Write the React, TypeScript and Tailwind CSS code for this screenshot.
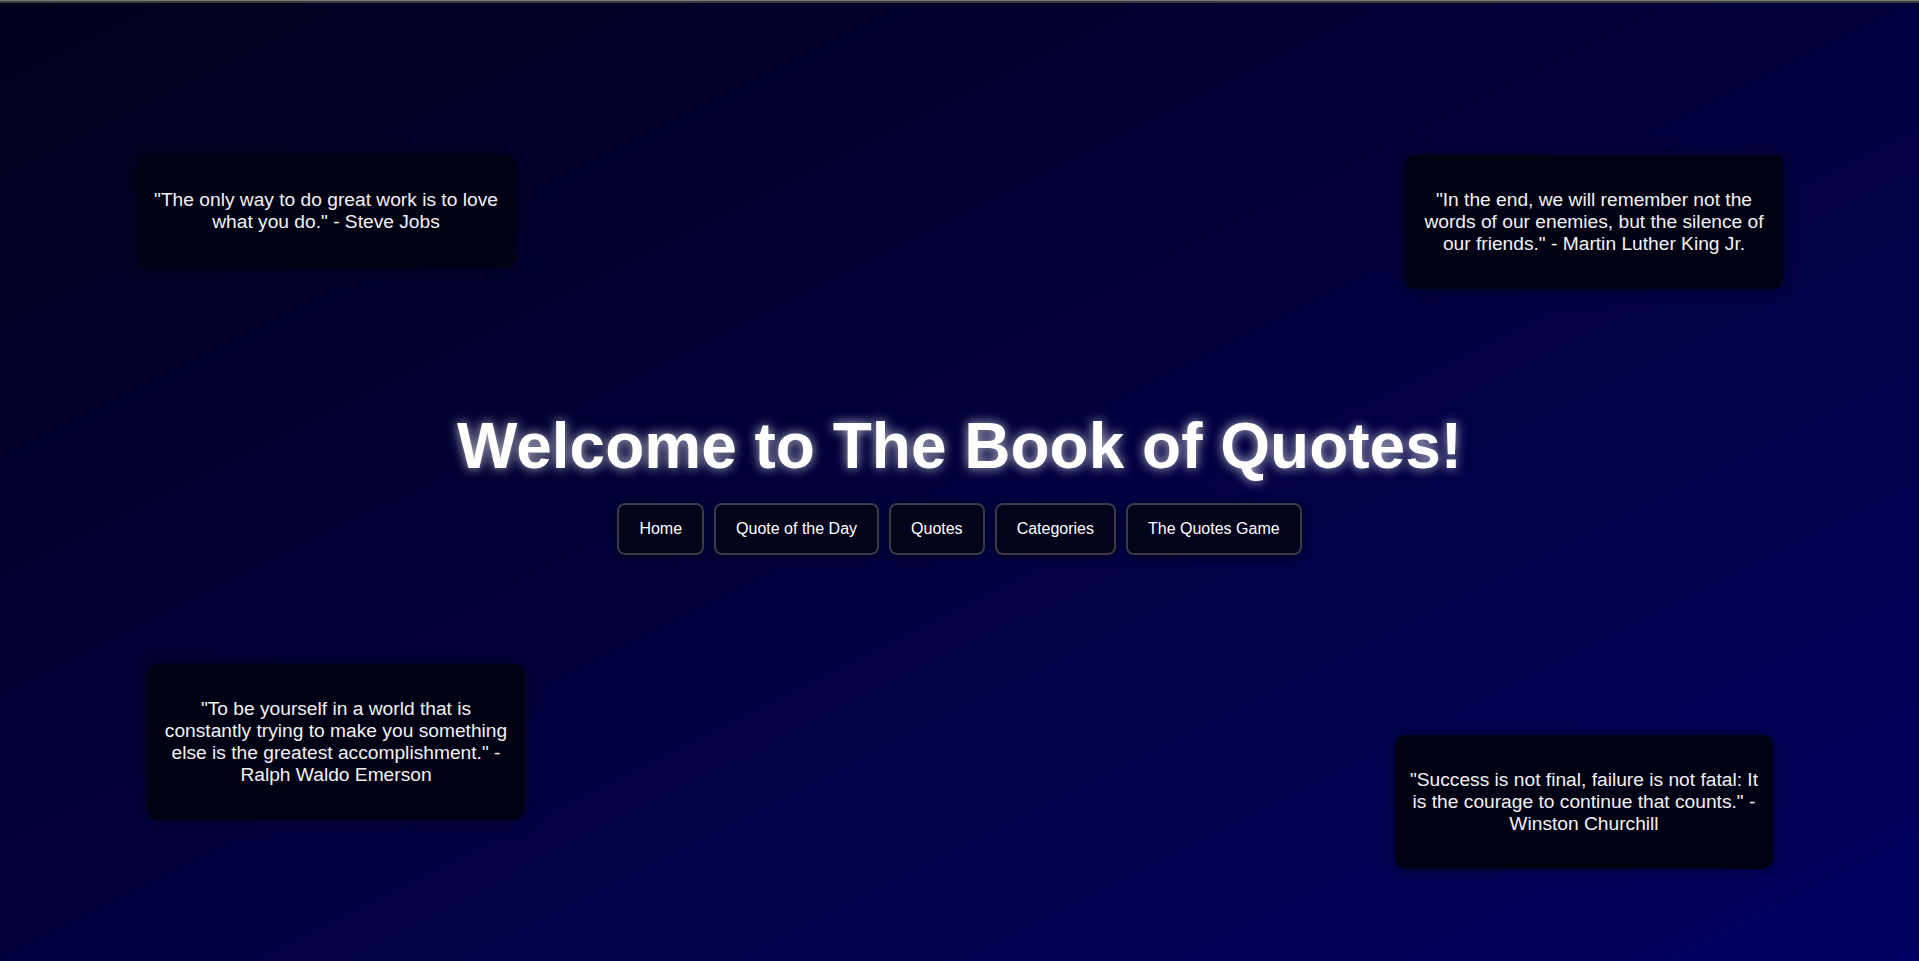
import React from 'react';

const quotesTop = [
  { text: '"The only way to do great work is to love what you do." - Steve Jobs' },
  { text: '"In the end, we will remember not the words of our enemies, but the silence of our friends." - Martin Luther King Jr.' },
];

const navItems = ['Home', 'Quote of the Day', 'Quotes', 'Categories', 'The Quotes Game'];

// 浮かんでいる引用カード
function QuoteCard({ text, className = '' }: { text: string; className?: string }) {
  return (
    <div
      className={`w-[378px] rounded-[10px] bg-[#010114] px-[14px] py-[34px] text-center text-[19.2px] leading-[22px] text-[#f2f2f2] shadow-[0_0_15px_rgba(0,0,0,0.45)] ${className}`}
    >
      {text}
    </div>
  );
}

export default function App() {
  return (
    <div
      className="min-h-screen h-[961px] overflow-hidden bg-linear-to-br from-[#00001c] to-[#000062]"
      style={{ fontFamily: '"Liberation Sans", Arial, sans-serif' }}
    >
      {/* top edge */}
      <div className="h-[3px] border-t border-[#7a7a7a] bg-[#3a3a3a]" />

      {/* 上段 */}
      <div className="flex items-start justify-between pl-[137px] pr-[136px] pt-[152px]">
        <QuoteCard text={quotesTop[0].text} />
        <QuoteCard text={quotesTop[1].text} />
      </div>

      {/* タイトル + ナビ */}
      <div className="mt-[120px] flex flex-col items-center">
        <h1 className="text-[64px] font-bold leading-[74px] text-white [text-shadow:0_0_12px_rgba(255,255,255,0.75)]">
          Welcome to The Book of Quotes!
        </h1>
        <nav className="mt-[20px] flex gap-[10px]">
          {navItems.map((item) => (
            <button
              key={item}
              className="rounded-[8px] border-2 border-[#3b3b48] bg-[#03031a] px-[20px] py-[15px] text-[16px] leading-[18px] text-white shadow-[0_2px_8px_rgba(0,0,0,0.5)]"
            >
              {item}
            </button>
          ))}
        </nav>
      </div>

      {/* 下段 */}
      <div className="mt-[109px] flex items-start justify-between pl-[147px] pr-[146px]">
        <QuoteCard text={'"To be yourself in a world that is constantly trying to make you something else is the greatest accomplishment." - Ralph Waldo Emerson'} />
        <QuoteCard
          className="mt-[71px]"
          text={'"Success is not final, failure is not fatal: It is the courage to continue that counts." - Winston Churchill'}
        />
      </div>
    </div>
  );
}
